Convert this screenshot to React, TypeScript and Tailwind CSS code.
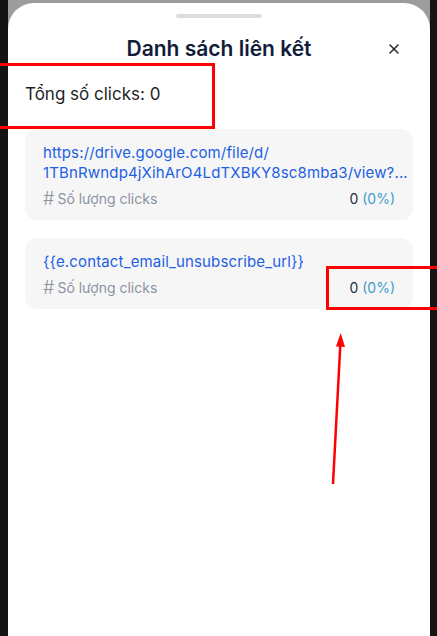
import { X } from "lucide-react";

type LinkItem = {
  lines: string[];
  clicks: number;
  percent: string;
};

const links: LinkItem[] = [
  {
    lines: ["https://drive.google.com/file/d/", "1TBnRwndp4jXihArO4LdTXBKY8sc8mba3/view?..."],
    clicks: 0,
    percent: "0%",
  },
  { lines: ["{{e.contact_email_unsubscribe_url}}"], clicks: 0, percent: "0%" },
];

function LinkCard({ item }: { item: LinkItem }) {
  return (
    <div className="rounded-[12px] bg-[#f6f6f7] px-[18px] pt-[14px] pb-[11px]">
      {item.lines.map((line, i) => (
        <div key={i} className="whitespace-nowrap text-[15px] leading-[20px] tracking-[0.15px] text-[#1d5fe3]">
          {line}
        </div>
      ))}
      <div className="mt-[6px] flex items-center justify-between text-[14px] leading-[20px]">
        <div className="flex items-center gap-[3px] text-[#8b93a1]">
          <span className="text-[18px] font-light">#</span>
          <span>Số lượng clicks</span>
        </div>
        <div className="text-[#2a2f3a]">
          {item.clicks} <span className="text-[#3c9ccc]">({item.percent})</span>
        </div>
      </div>
    </div>
  );
}

export default function App() {
  return (
    <div
      className="relative h-[636px] w-[437px] overflow-hidden bg-[#141414]"
      style={{ fontFamily: "Inter, 'Noto Sans', sans-serif" }}
    >
      <div className="ml-[8px] mr-[7px] h-full bg-[#9c9c9c] pt-[3px]">
        <div className="flex h-full flex-col rounded-t-[26px] bg-white">
          {/* handle */}
          <div className="flex justify-center pt-[11px]">
            <div className="h-[4px] w-[86px] rounded-full bg-[#d9dde1]" />
          </div>

          {/* header */}
          <div className="relative mt-[17px] flex items-center justify-center">
            <h1 className="text-[21px] font-semibold leading-[28px] text-[#111c3a]">Danh sách liên kết</h1>
            <button className="absolute right-[28px] top-[6px] text-[#222]">
              <X size={16} strokeWidth={2} />
            </button>
          </div>

          <div className="mt-[19px] px-[17px] text-[17px] leading-[24px] text-[#1f1f1f]">Tổng số clicks: 0</div>

          <div className="mt-[23px] flex flex-col gap-[18px] px-[17px]">
            {links.map((l, i) => (
              <LinkCard key={i} item={l} />
            ))}
          </div>
        </div>
      </div>

      {/* annotations */}
      <div className="absolute left-[-4px] top-[63px] h-[66px] w-[219px] border-[3px] border-[#f00]" />
      <div className="absolute left-[326px] top-[266px] h-[44px] w-[120px] border-[3px] border-[#f00]" />
      <svg className="absolute left-0 top-0" width="437" height="636">
        <line x1="333" y1="484" x2="340.3" y2="345" stroke="#f00" strokeWidth="2.5" />
        <polygon points="340.7,333 345,347 336,346.5" fill="#f00" />
      </svg>
    </div>
  );
}
